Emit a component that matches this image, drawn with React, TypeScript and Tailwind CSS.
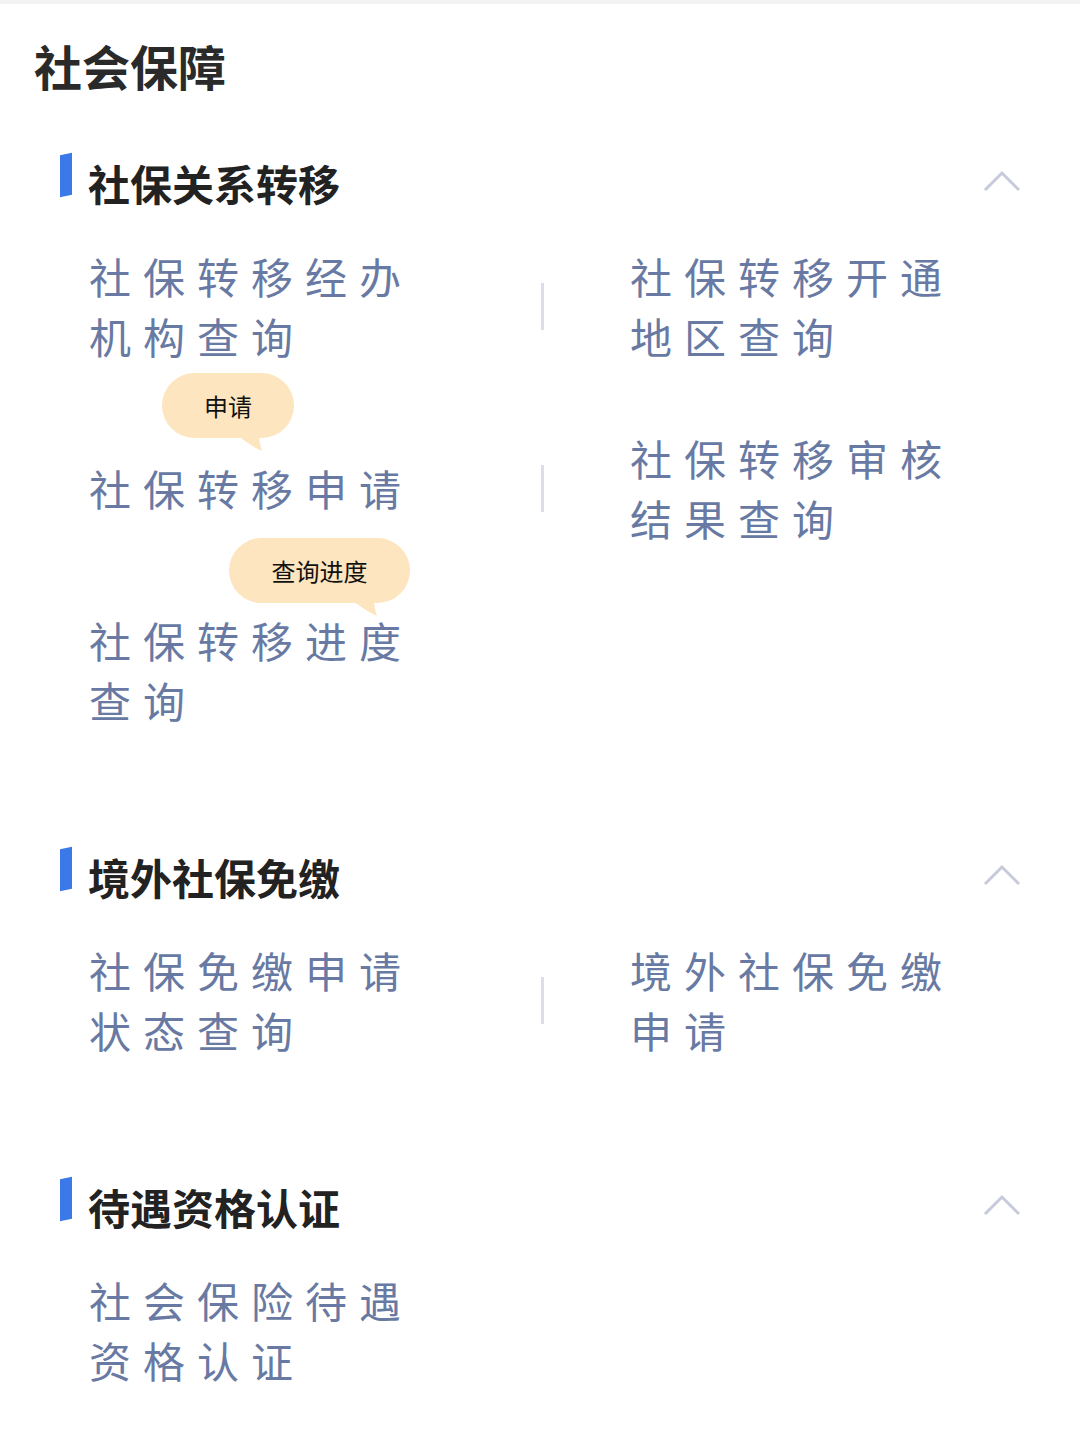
import React from "react";

const FONT = { fontFamily: '"Noto Sans CJK SC", "Noto Sans", sans-serif' };

type Bubble = { text: string; left: number; top: number; width: number; tailX: number };
type Row = { left: string; right?: string; bubble?: Bubble };
type Section = { title: string; rows: Row[] };

const sections: Section[] = [
  {
    title: "社保关系转移",
    rows: [
      { left: "社保转移经办机构查询", right: "社保转移开通地区查询" },
      {
        left: "社保转移申请",
        right: "社保转移审核结果查询",
        bubble: { text: "申请", left: 73, top: -55, width: 132, tailX: 75 },
      },
      {
        left: "社保转移进度查询",
        bubble: { text: "查询进度", left: 140, top: -72, width: 181, tailX: 123 },
      },
    ],
  },
  {
    title: "境外社保免缴",
    rows: [{ left: "社保免缴申请状态查询", right: "境外社保免缴申请" }],
  },
  {
    title: "待遇资格认证",
    rows: [{ left: "社会保险待遇资格认证" }],
  },
];

function Tip({ b }: { b: Bubble }) {
  return (
    <div
      className="absolute h-[65px] rounded-full bg-[#fde5bf] flex items-center justify-center"
      style={{ left: b.left, top: b.top, width: b.width }}
    >
      <span className="text-[24px] leading-none text-[#111]">{b.text}</span>
      <svg
        className="absolute top-[62px]"
        style={{ left: b.tailX }}
        width="26"
        height="18"
        viewBox="0 0 26 18"
      >
        <path d="M0 0 Q 12 10 25 16 Q 22 8 22 0 Z" fill="#fde5bf" />
      </svg>
    </div>
  );
}

function Item({ text }: { text: string }) {
  return (
    <span className="block w-[330px] text-[42px] leading-[60px] tracking-[12px] text-[#687aa3]">
      {text}
    </span>
  );
}

export default function App() {
  return (
    <div className="min-h-[1439px] bg-white" style={FONT}>
      <div className="h-[4px] bg-[#f2f2f2]" />
      <div className="pl-[34px] pt-[33px] h-[89px] flex items-center">
        <h1 className="text-[48px] leading-none font-bold text-[#2a2a2a]">社会保障</h1>
      </div>

      <div className="mt-[60px] flex flex-col gap-[117px]">
        {sections.map((s) => (
          <section key={s.title} className="px-[60px]">
            <div className="h-[60px] flex items-center">
              <div className="w-[12px] h-[42px] bg-[#3b78e8] -skew-y-12 -mt-[16px]" />
              <h2 className="ml-[16px] text-[42px] leading-none font-bold text-[#222]">{s.title}</h2>
              <svg className="ml-auto mt-[-4px] mr-[-3px]" width="40" height="26" viewBox="0 0 40 26">
                <polyline
                  points="2,22 19,5 36,22"
                  fill="none"
                  stroke="#c7cada"
                  strokeWidth="3"
                />
              </svg>
            </div>

            <div className="mt-[33px] flex flex-col gap-[62px]">
              {s.rows.map((r) => (
                <div key={r.left} className="h-[120px] flex items-center pl-[29px]">
                  <div className="relative self-stretch w-[452px] flex items-center">
                    {r.bubble && <Tip b={r.bubble} />}
                    <Item text={r.left} />
                  </div>
                  {r.right && (
                    <>
                      <div className="w-[3px] h-[47px] bg-[#dcdcec]" />
                      <div className="pl-[86px]">
                        <Item text={r.right} />
                      </div>
                    </>
                  )}
                </div>
              ))}
            </div>
          </section>
        ))}
      </div>
    </div>
  );
}
